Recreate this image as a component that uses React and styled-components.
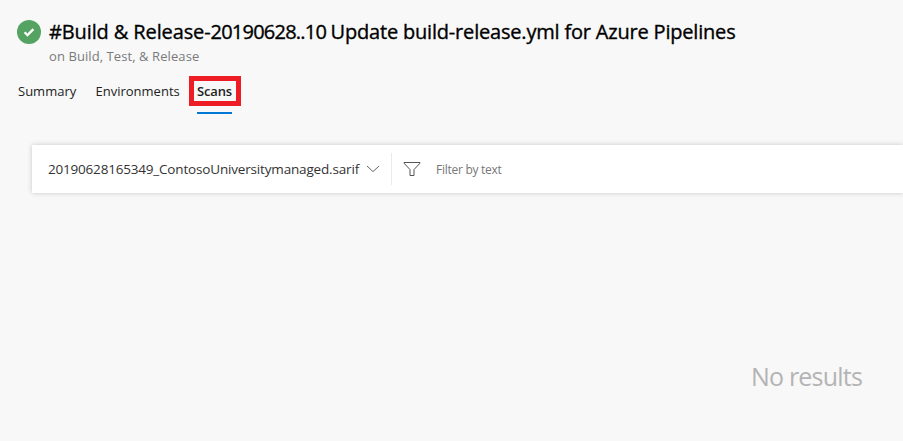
import React from "react";
import styled, { createGlobalStyle } from "styled-components";

const GlobalStyle = createGlobalStyle`
  * { box-sizing: border-box; }
  body {
    margin: 0;
    background: #f8f8f8;
    font-family: "Open Sans", "Noto Sans", sans-serif;
    overflow: hidden;
  }
`;

const Page = styled.div`
  height: 441px;
  display: flex;
  flex-direction: column;
  background: #f8f8f8;
  overflow: hidden;
  white-space: nowrap;
`;

const Header = styled.header`
  display: flex;
  gap: 8px;
  padding: 18px 0 0 17px;
`;

const StatusIcon = styled.svg`
  width: 24px;
  height: 24px;
  margin-top: 2px;
  flex: none;
`;

const Title = styled.h1`
  margin: 0;
  font-size: 20px;
  line-height: 28px;
  font-weight: 400;
  color: #000;
  -webkit-text-stroke: 0.35px #000;
`;

const Tracked = styled.span`
  letter-spacing: ${(p) => p.$spacing}px;
`;

const Subtitle = styled.div`
  font-size: 13px;
  line-height: 20px;
  letter-spacing: 0.08px;
  color: #7a7a7a;
`;

const Tabs = styled.nav`
  display: flex;
  height: 38px;
  margin-top: 10px;
  padding-left: 18px;
`;

const Tab = styled.a`
  width: ${(p) => p.$width}px;
  margin-right: ${(p) => p.$gap || 0}px;
  height: 38px;
  padding-top: 5px;
  font-size: 13px;
  line-height: 20px;
  color: #222;
  font-weight: ${(p) => (p.$active ? 600 : 400)};
  border-bottom: 2px solid ${(p) => (p.$active ? "#0078d4" : "transparent")};
`;

const Highlight = styled.span`
  display: block;
  width: 52px;
  height: 30px;
  margin: -5px 0 0 -8px;
  padding: 0 3px;
  line-height: 20px;
  letter-spacing: -0.15px;
  border: 5px solid #ee1c25;
`;

const FilterBar = styled.section`
  display: flex;
  align-items: center;
  height: 48px;
  margin: 31px 0 0 32px;
  padding-left: 16px;
  background: #fff;
  box-shadow: 0 0 5px rgba(0, 0, 0, 0.2);
`;

const FileSelect = styled.div`
  display: flex;
  align-items: center;
  width: 344px;
  height: 32px;
  border-right: 1px solid #eaeaea;
`;

const FileName = styled.span`
  width: 318px;
  flex: none;
  padding-bottom: 1px;
  font-size: 13.5px;
  line-height: 20px;
  color: #333;
`;

const Chevron = styled.svg`
  flex: none;
  width: 14px;
  height: 8px;
`;

const Funnel = styled.svg`
  width: 18px;
  height: 16px;
  margin: 0 15px 0 11px;
`;

const FilterText = styled.span`
  padding-top: 2px;
  font-size: 12px;
  line-height: 16px;
  letter-spacing: -0.27px;
  color: #777;
`;

const Empty = styled.main`
  padding: 165px 0 0 751px;
  font-size: 25px;
  line-height: 36px;
  letter-spacing: -0.8px;
  color: #b4b4b4;
`;

export default function App() {
  return (
    <>
      <GlobalStyle />
      <Page>
        <Header>
          <StatusIcon viewBox="0 0 24 24">
            <circle cx="12" cy="12" r="12" fill="#55a362" />
            <path d="M7.6 12.2l2.9 2.9 5.9-6" fill="none" stroke="#fff" strokeWidth="2.3" />
          </StatusIcon>
          <div>
            <Title>
              <Tracked $spacing={-0.12}>#Build &amp; Release-</Tracked>
              <Tracked $spacing={-0.77}>20190628..10 </Tracked>
              <Tracked $spacing={-0.19}>Update build-release.yml for Azure Pipelines</Tracked>
            </Title>
            <Subtitle>on Build, Test, &amp; Release</Subtitle>
          </div>
        </Header>
        <Tabs>
          <Tab $width={58} $gap={19.5}>Summary</Tab>
          <Tab $width={84} $gap={17.5}>Environments</Tab>
          <Tab $width={35} $active>
            <Highlight>Scans</Highlight>
          </Tab>
        </Tabs>
        <FilterBar>
          <FileSelect>
            <FileName>
              <Tracked $spacing={-0.2}>20190628165349</Tracked>
              <Tracked $spacing={-0.17}>_ContosoUniversitymanaged.sarif</Tracked>
            </FileName>
            <Chevron viewBox="0 0 14 8">
              <path d="M1 1l6 5.6L13 1" fill="none" stroke="#666" strokeWidth="1" />
            </Chevron>
          </FileSelect>
          <Funnel viewBox="0 0 18 16">
            <path d="M1 1.5h16v.6L11 8.6v5.9H7V8.6L1 2.1z" fill="none" stroke="#555" strokeWidth="1" />
          </Funnel>
          <FilterText>Filter by text</FilterText>
        </FilterBar>
        <Empty>No results</Empty>
      </Page>
    </>
  );
}
